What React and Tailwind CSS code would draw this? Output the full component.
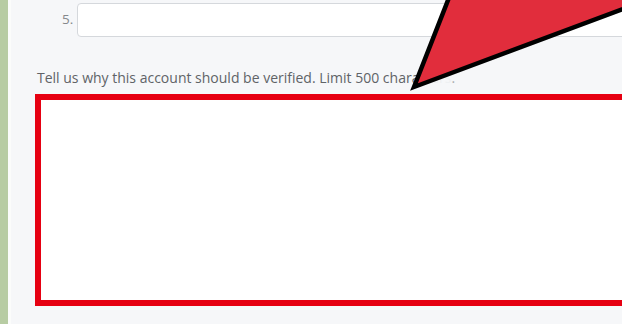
export default function App() {
  return (
    <div className="relative flex w-[622px] h-[324px] overflow-hidden bg-[#f6f7f9]" style={{ fontFamily: '"Open Sans", "Noto Sans", sans-serif' }}>
      <div className="w-[8px] shrink-0 bg-[#b7cca3]" />
      <div className="w-[3px] shrink-0 bg-[#fbfcfb]" />
      <div className="flex flex-col pl-[24px] min-w-0">
        <div className="mt-[3px] flex h-[34px] items-center pl-[27px]">
          <span className="w-[15px] shrink-0 text-[13.5px] leading-none text-[#85888c]">5.</span>
          <div className="h-[34px] w-[600px] shrink-0 rounded-[4px] border border-[#d5d8dc] bg-white" />
        </div>
        <p className="ml-[2px] mt-[32px] h-[18px] whitespace-nowrap text-[14px] leading-[18px] text-[#606367]">
          Tell us why this account should be verified. Limit 500 charac<span className="text-[#eef0f2]">ters</span><span className="text-[#a9acb0]">.</span>
        </p>
        <div className="mt-[7px] h-[212px] w-[620px] shrink-0 border-[6px] border-[#e60012] bg-white" />
      </div>
      <svg className="pointer-events-none absolute left-0 top-0" width="622" height="324" viewBox="0 0 622 324">
        <polygon points="414,87 452,-10 700,-10 650,-1" fill="#e12d3c" stroke="#000" strokeWidth="4.5" strokeLinejoin="miter" />
      </svg>
    </div>
  );
}
